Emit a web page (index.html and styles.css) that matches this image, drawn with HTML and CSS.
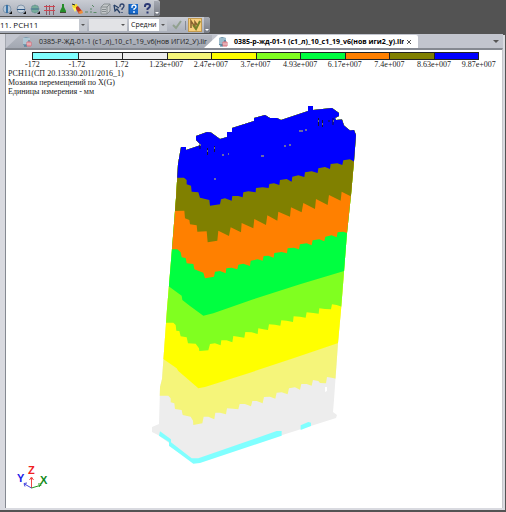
FILE: index.html
```html
<!DOCTYPE html>
<html lang="ru">
<head>
<meta charset="utf-8">
<title>Мозаика перемещений</title>
<link rel="stylesheet" href="styles.css">
</head>
<body>
<header class="toolbars">
  <div class="toolbar upper" role="toolbar" aria-label="Вид">
    <button class="tool" aria-label="Шар, вертикаль"><svg viewBox="0 0 14 14"><circle cx="7" cy="7" r="4" fill="#b4c5d6" stroke="#8597aa"/><path d="M7 3v8" stroke="#3a74a8" stroke-width="2"/><path d="M9 12h3v-3z" fill="#111"/></svg></button>
    <button class="tool" aria-label="Шар, горизонталь"><svg viewBox="0 0 14 14"><circle cx="7" cy="7" r="4" fill="#c6d1dc" stroke="#8597aa"/><path d="M3 7.500h8" stroke="#2a5687"/><path d="M9 12h3v-3z" fill="#111"/></svg></button>
    <button class="tool" aria-label="Шар, сетка"><svg viewBox="0 0 14 14"><circle cx="7" cy="7" r="4" fill="#a3c2bf" stroke="#7f9da3"/><path d="M5 4v6M7 3v8M9 4v6" stroke="#4a9474"/><path d="M3 7h8" stroke="#3c6d8b"/><path d="M9 12h3v-3z" fill="#111"/></svg></button>
    <button class="tool" aria-label="Сетка"><svg viewBox="0 0 14 14"><path d="M4.500 3v10M7.500 3v10M11.500 3v10" stroke="#8c5a66" fill="none"/><path d="M2 4.500h11M2 8.500h11" stroke="#d04450"/></svg></button>
    <button class="tool" aria-label="Нагрузка"><svg viewBox="0 0 14 14"><path d="M6 2h2v3l2 4v1H4V9l2-4z" fill="#258c28"/><path d="M4 10h6v1H4z" fill="#414a37"/></svg></button>
    <button class="tool" aria-label="Фонарик"><svg viewBox="0 0 14 14"><path d="M2 3l5-1 1 4-4 2z" fill="#f4dc28"/><path d="M2 5l3 5 2-3z" fill="#fff36a"/><path d="M6 5l2-1 4 5-3 3-3-5z" fill="#b93424"/><path d="M8 10l4-2 1 3-3 1z" fill="#f18c36"/><path d="M2 2l3 1" stroke="#222"/></svg></button>
    <button class="tool" aria-label="Оси"><svg viewBox="0 0 14 14"><path d="M1 10h3M6 10h2M9.500 10.500h3M6 7h2M8 3l2 2" stroke="#5a8a66" fill="none"/></svg></button>
    <button class="tool" aria-label="Проекция"><svg viewBox="0 0 14 14"><path d="M3 5l3-3h6v7l-3 3H3z" fill="#c3c7c9" stroke="#8a9194"/><path d="M3 5h6v7M9 5l3-3M4 7.500h4M4 9.500h4" fill="none" stroke="#858c8f"/></svg></button>
    <button class="tool" aria-label="Подсказка"><svg viewBox="0 0 14 14"><path d="M2 3l1 6 2-2 3 4M2 3l5 3" fill="none" stroke="#243e65" stroke-width="1.300"/><path d="M8 5V4q0-2 2-2t2 2q0 1-2 3v1M10 10v1" fill="none" stroke="#2c416b" stroke-width="1.300"/></svg></button>
    <button class="tool" aria-label="Справка"><svg viewBox="0 0 14 14"><path d="M3 2h9v10H3z" fill="#1869ca"/><path d="M3 2v10h9" fill="none" stroke="#104686"/><path d="M6 6V5q0-2 2-2t2 2q0 1-2 2v1M8 9v2" fill="none" stroke="#fff" stroke-width="1.300"/></svg></button>
    <button class="tool" aria-label="Помощь"><svg viewBox="0 0 14 14"><path d="M5 5V4q0-2 2.500-2t2.500 2q0 1-2.500 3v1M7.500 9.500v2" fill="none" stroke="#2b3975" stroke-width="2"/></svg></button>
    <button class="more" aria-label="Параметры панели"></button>
  </div>
  <div class="toolbar lower" role="toolbar" aria-label="Загружения">
    <label class="pick wide"><select aria-label="Загружение"><option>11. РСН11</option></select></label>
    <label class="pick off"><select aria-label="Форма" disabled><option></option></select></label>
    <label class="pick"><select aria-label="Слой"><option>Средни</option></select></label>
    <button class="tool" aria-label="Применить"><svg viewBox="0 0 14 14"><path d="M4 7l3 3 5-7" fill="none" stroke="#91a18f" stroke-width="2"/></svg></button>
    <span class="divider"></span>
    <button class="tool active" aria-label="Мозаика"><svg viewBox="0 0 14 14"><path d="M3 10V3l4 6V4l3 4" fill="none" stroke="#87622e" stroke-width="1.500"/><path d="M5 7l3 4 4-8" fill="none" stroke="#75822a" stroke-width="2"/></svg></button>
    <button class="more" aria-label="Параметры панели"></button>
  </div>
</header>

<main class="workspace">
  <nav class="tabs" aria-label="Документы">
    <a class="tab" href="#doc"><span class="label"><svg class="doc" viewBox="0 0 12 12"><path d="M2 2l3-1 4 1v7L5 10 2 9z" fill="#789baf"/><path d="M2 3h7M2 5h5M2 7h4" stroke="#e5f4fa"/><path d="M3 10h3" stroke="#387491"/><path d="M6 6h4v4H6zM8 6v4" fill="#eee" stroke="#db6c79"/></svg>0385-Р-ЖД-01-1 (с1_л)_10_с1_19_v6(нов ИГИ2_У).lir</span></a>
    <a class="tab current" href="#doc"><span class="label"><svg class="doc" viewBox="0 0 12 12"><path d="M2 2l3-1 4 1v7L5 10 2 9z" fill="#638ca4"/><path d="M2 3h7M2 5h5M2 7h4" stroke="#d8edf5"/><path d="M3 10h3" stroke="#387491"/><path d="M6 6h4v4H6zM8 6v4" fill="#eee" stroke="#db6c79"/></svg>0385-р-жд-01-1 (с1_л)_10_с1_19_v6(нов иги2_у).lir</span></a>
    <button class="close" aria-label="Закрыть"><svg viewBox="0 0 8 8"><path d="M2 2l4 4M6 2L2 6" stroke="#555"/></svg></button>
    <button class="list" aria-label="Список вкладок"></button>
  </nav>

  <section class="canvas" id="doc">
    <div class="scale">
      <i class="c0"></i><i class="c1"></i><i class="c1"></i><i class="c3"></i><i class="c4"></i><i class="c5"></i><i class="c6"></i><i class="c7"></i><i class="c8"></i><i class="c9"></i>
    </div>
    <div class="ticks">
      <span>-172</span><span>-1.72</span><span>1.72</span><span>1.23e+007</span><span>2.47e+007</span><span>3.7e+007</span><span>4.93e+007</span><span>6.17e+007</span><span>7.4e+007</span><span>8.63e+007</span><span>9.87e+007</span>
    </div>
    <div class="notes">
      <p>РСН11(СП 20.13330.2011/2016_1)</p>
      <p>Мозаика перемещений по X(G)</p>
      <p>Единицы измерения - мм</p>
    </div>
    <svg class="model" viewBox="6 96 496 412" role="img" aria-label="Мозаика перемещений по зданию">
      <defs>
        <clipPath id="hull"><path d="M181 147h5v3l15-5-5-5v-4l11-4 4 .500 9 6.500 7-2v-5h5v-4l22-7v-3l11-3 5 3h7l4 2 27-9v-5h5v4l19-2 7 5v3l-4 2 1 2 6-.500 2 6 6 5 4-.500 2 5-2 26-3 34-4 38-3 39-3 38-3 33-4 57-1 12 4 3-1 3-142 45-25-17v-3l-11-8-6-3v-5l7-3 1-37 2-8 5-70 3-36 3-37 3-38 2-34z"/></clipPath>
      </defs>
      <g clip-path="url(#hull)">
        <path d="M145 95h220v375H145z" fill="#ededed"/>
        <path transform="translate(145 380) scale(.3333)" fill="#f5f57a" d="M-30-900V47H70L77 55V67L88 70 90 87 110 90 113 105 137 110 144 122 145 135 172 130 176 110H190L208 118 211 98H225L243 103 246 85 265 86 280 88 284 72H300L318 79 322 63H335L353 70 357 51 375 50 391 56 395 38 410 37 428 43 432 25 450 22 465 29 469 12H485L500 17 504 0 520 3 525 9 543 10 546-9 560-7 580-2 700-20V-900z"/>
        <path transform="translate(150 300) scale(.3333)" fill="#ff0" d="M-30-700V130L40 177 80 205 85 213 145 265 165 261 300 218 430 175 567 128 700 84V-700z"/>
        <path transform="translate(150 300) scale(.3333)" fill="#80ff20" d="M-30-700V68H70L77 75 79 92 88 93 92 109 110 112 114 130 137 131 147 145 148 153 175 151 180 132 195 130 212 136 214 121H230L247 127 250 108 265 110 283 113 286 96 305 97 323 102 325 85 340 88 354 90 357 73 375 74 391 77 394 61 410 62 429 66 431 49 450 50 467 53 470 37 490 39 506 41 508 25 525 27 543 28 546 13 560 15 580 22 700 0V-700z"/>
        <path transform="translate(160 190) scale(.3333)" fill="#00ff40" d="M-30-400V247L28 290 65 317 67 330 90 348 130 377 160 370 280 328 420 283 555 242 700 198V-400z"/>
        <path transform="translate(160 190) scale(.3333)" fill="#ff8000" d="M-30-400V178H52L62 187 65 202 77 204 80 220 100 222 103 238 130 248 135 265 162 260 165 245 180 243 197 250 199 235 215 233 232 238 235 224 250 221 270 228 272 212 293 208 308 212 311 198 325 197 341 203 343 189 365 186 381 190 383 175 402 173 417 178 420 163 440 160 455 166 458 151 478 148 493 154 496 140 515 136 530 142 533 127 550 125 563 130 700 90V-400z"/>
        <path transform="translate(160 190) scale(.3333)" fill="#808000" d="M-30-400V65L73 62 75 85 88 90 90 103 110 106 112 125 140 124 143 157 172 152 175 122 207 138 212 112 243 127 245 99 280 115 283 87 318 105 322 76 352 92 355 65 390 80 393 52 425 67 430 39 465 57 468 27 503 45 507 15 542 32 545 5 575 20 700 0V-400z"/>
        <path transform="translate(170 95) scale(.3333)" fill="#00f" d="M-30-100V248H42L50 255V268L63 272 65 290 85 292 90 308 118 315 120 332 150 328 153 313 165 310 185 317 187 303H205L218 307 220 292 235 289 257 292 258 279 278 277 296 279 298 267 312 265 328 270 330 255 350 252 365 260 367 245 385 241 403 246 405 232 425 229 443 234 445 220 465 216 480 222 482 207 502 205 517 210 520 196 540 193 553 200 700 160V-100z"/>
      </g>
      <path transform="translate(145 380) scale(.3333)" d="M45 154L78 178V187L140 235H160L395 153H410V167L165 249 145 251 72 197V186L42 167zM467 136L490 126 498 128V138L467 150z" fill="#80ffff"/>
      <path d="M325 387h2v4l-2 1z" fill="#fff"/>
      <g stroke="#151532" stroke-width="1"><path d="M200 144v5M207.500 148v7M214.500 146v6M318.500 118v8M322.500 120v7M333 118v7M329 120v2"/></g>
      <path d="M222 155h2M228 154h1M261 156h3M284 146h2M289 145h2M299 131h4M305 130h2M214 179h2M200 145h1M207 151h1M214 148h1M318 121h1M322 124h1M333 121h1" stroke="#8c8c8c" stroke-width="1.500"/>
      <g fill="none">
        <path d="M31.500 488v-10M29.500 480l2-3 2 3" stroke="#e44"/>
        <path d="M31.500 488l-7-4M27 483l-3 .500 1 3" stroke="#44d"/>
        <path d="M31.500 488l10-3M38 484h3l-2 3" stroke="#292"/>
      </g>
      <g class="axis"><text x="28" y="474" fill="#f02020">Z</text><text x="17" y="482" fill="#2020e8">Y</text><text x="40" y="484" fill="#108a20">X</text></g>
    </svg>
  </section>
</main>
</body>
</html>
```

FILE: styles.css
```css
* { box-sizing: border-box; }

body {
  margin: 0;
  min-height: 100vh;
  display: flex;
  flex-direction: column;
  background: #535353;
  font-family: "Open Sans", "Noto Sans", sans-serif;
  font-size: 7px;
  color: #222;
}

button { border: 0; padding: 0; background: none; }

.toolbars { display: flex; flex-direction: column; align-items: flex-start; gap: 1px; }

.toolbar {
  display: flex;
  align-items: center;
  height: 16px;
  background: linear-gradient(#c9ccd3, #a8adb8);
  border-radius: 0 3px 3px 0;
}
.upper { padding-top: 1px; }

.tool { width: 14px; height: 14px; }
.tool svg { display: block; width: 100%; height: 100%; }

.more {
  position: relative;
  align-self: stretch;
  width: 6px;
  background: linear-gradient(#a5a9b2, #777b84);
  border-radius: 0 3px 3px 0;
}
.more::after {
  content: "";
  position: absolute;
  right: 1px;
  bottom: 2px;
  border: 2px solid transparent;
  border-top-color: #fff;
  border-bottom: 0;
}

.lower { gap: 2px; }

.pick { position: relative; display: block; width: 38px; height: 12px; background: #fff; }
.pick.wide { width: 87px; }
.pick select {
  display: block;
  width: 100%;
  height: 100%;
  padding: 0 0 0 2px;
  border: 0;
  background: none;
  appearance: none;
  font: 7px/12px "Open Sans", "Noto Sans", sans-serif;
  color: #111;
}
.pick.wide select { padding-left: 0; font-size: 8px; }
.pick::before {
  content: "";
  position: absolute;
  inset: 0 0 0 auto;
  width: 8px;
  background: #c5c9d0;
}
.pick::after {
  content: "";
  position: absolute;
  right: 2px;
  top: 5px;
  border: 2px solid transparent;
  border-top-color: #555;
  border-bottom: 0;
}
.pick.off, .pick.off::before { background: #e2e3e6; }

.divider { width: 1px; height: 9px; background: #858a94; }
.active { height: 14px; background: #f8cf7c; outline: 1px solid #c29a50; outline-offset: -1px; }

.workspace {
  flex: 1;
  display: flex;
  flex-direction: column;
  margin: 1px 1px 2px 0;
  padding: 0 2px 2px 5px;
  background: linear-gradient(#535353, #535353) 5px 0 / 100% 1px no-repeat, #d9dae0;
}

.tabs {
  display: flex;
  height: 14px;
  padding-top: 1px;
  background: #c2c5ce;
  border-left: 1px solid #a4a8b0;
}
.tab {
  display: flex;
  align-items: center;
  width: 206px;
  padding-left: 15px;
  background: linear-gradient(#b4b8c1, #a3a8b2);
  clip-path: polygon(14px 0, 100% 0, 100% 100%, 0 100%);
  color: #222;
  text-decoration: none;
  white-space: nowrap;
}
.tab.current {
  width: 200px;
  margin-left: -8px;
  padding-left: 13px;
  background: #fff;
  color: #000;
  font-weight: bold;
}
.label { display: flex; align-items: center; gap: 6px; }
.current .label { gap: 5px; }
.doc { width: 12px; height: 12px; }
.close { width: 14px; background: #fff; border-radius: 0 2px 0 0; }
.close svg { display: block; width: 8px; height: 8px; margin: auto 0 auto 1px; }
.list { width: 14px; margin-left: auto; }
.list::after {
  content: "";
  display: block;
  width: 0;
  margin: auto;
  border: 3px solid transparent;
  border-top-color: #555;
  border-bottom: 0;
}

.canvas {
  flex: 1;
  display: flex;
  flex-direction: column;
  background: #fff;
  border: 1px solid #858991;
  border-width: 2px 1px 0 1px;
  border-right-color: #c6c8cc;
  font-family: "Liberation Serif", serif;
  font-size: 8px;
  overflow: hidden;
}
.scale {
  display: grid;
  grid-template-columns: repeat(10, 1fr);
  height: 8px;
  margin: 2px 23px 0 26px;
  border: 1px solid #222;
}
.scale i + i { border-left: 1px solid #222; }
.c0 { background: #80ffff; }
.c1 { background: #ededed; }
.c3 { background: #f5f57a; }
.c4 { background: #ff0; }
.c5 { background: #80ff20; }
.c6 { background: #00ff40; }
.c7 { background: #ff8000; }
.c8 { background: #808000; }
.c9 { background: #00f; }

.ticks {
  display: grid;
  grid-template-columns: repeat(11, 1fr);
  margin: 0 1px 0 4px;
  line-height: 9px;
  text-align: center;
}
.notes { padding-left: 2px; line-height: 9px; }
.notes p { margin: 0; }

.model { display: block; width: 100%; flex: 1; min-height: 0; }
.axis { font: bold 11px "Liberation Sans", sans-serif; }
```
